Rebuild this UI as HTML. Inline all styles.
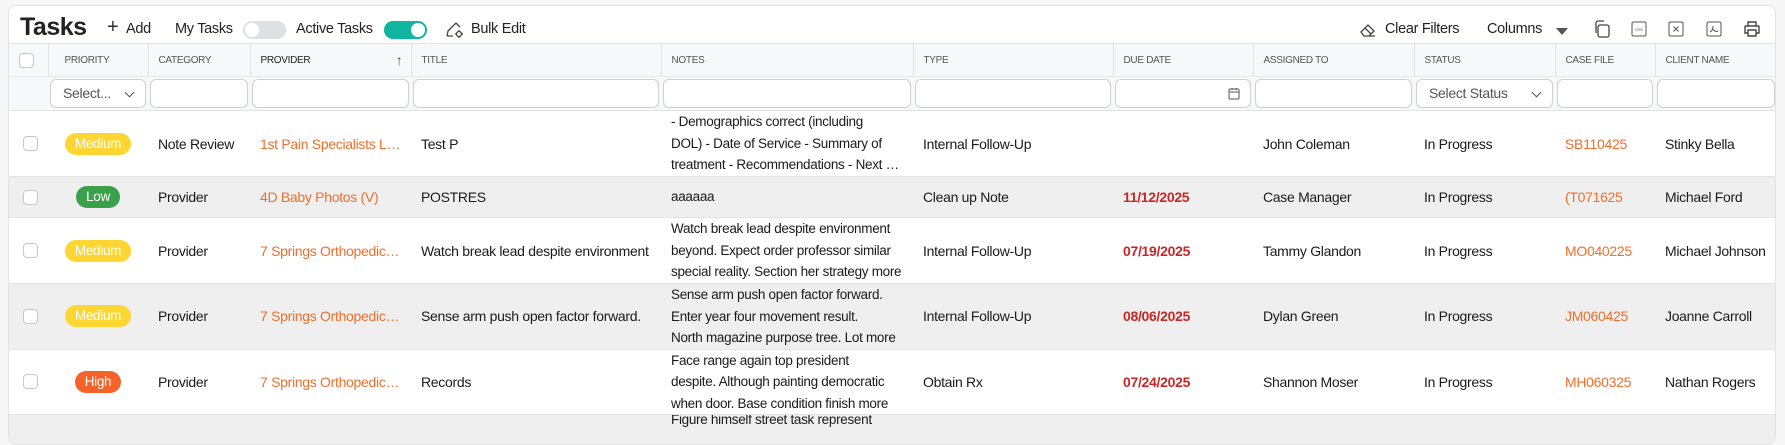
<!DOCTYPE html>
<html><head><meta charset="utf-8"><style>
*{box-sizing:border-box;margin:0;padding:0}
body{width:1785px;height:427px;overflow:hidden;background:#f7f7f7;font-family:"Liberation Sans",sans-serif;color:#1a1a1a;letter-spacing:-0.3px}
.card{position:absolute;left:8px;top:5px;width:1768px;height:440px;background:#fff;border:1px solid #e3e3e3;border-radius:8px;overflow:hidden}
.abs{position:absolute}
.tb{font-size:14.5px;color:#222;top:15px;position:absolute;white-space:nowrap}
.tgl{position:absolute;width:43px;height:18px;border-radius:9px;top:15px}
.tgl i{position:absolute;top:2px;width:14px;height:14px;border-radius:50%;background:#fff}
table{position:absolute;left:0;top:37px;border-collapse:collapse;table-layout:fixed;width:1768px}
td,th{font-size:14px;white-space:nowrap;overflow:hidden;text-overflow:ellipsis;padding:0 10px;text-align:left;vertical-align:middle}
th{height:33px;background:#f7f8f9;font-size:10px;font-weight:normal;color:#555;border-right:1px solid #e3e3e3;border-top:1px solid #e3e3e3}
tr.f td{height:34px;background:#f7f8f9;padding:0 2px;border-top:1px solid #e8e8e8}
.in{height:29px;border:1px solid #d0d0d0;border-radius:6px;background:#fff;font-size:14px;color:#555;line-height:27px;padding-left:12px;position:relative}
tr.r td{border-top:1px solid #e3e3e3}
tr.g td{background:#efefef}
.n{white-space:normal;line-height:21.5px;font-size:13.5px}
.n div{overflow:hidden;text-overflow:ellipsis;white-space:nowrap}
.o{color:#ee6f2d}
.d{color:#c62828;font-weight:bold}
.b{display:inline-block;color:#fff;border-radius:11px;height:22px;line-height:22px;padding:0 10px;font-size:13.5px}
.cb{width:15px;height:15px;border:1px solid #c8c8c8;border-radius:4px;background:#fff;margin-left:4px}
.ch{position:absolute;right:12px;top:9px;width:7px;height:7px;border-right:1.5px solid #555;border-bottom:1.5px solid #555;transform:rotate(45deg)}
</style></head><body>
<div class="card">
<div class="abs" style="left:11px;top:7px;font-size:25px;font-weight:bold;color:#222;letter-spacing:-0.5px">Tasks</div>
<div class="tb" style="left:98px;font-size:20px;top:10px;color:#333">+</div>
<div class="tb" style="left:117px">Add</div>
<div class="tb" style="left:166px">My Tasks</div>
<div class="tgl" style="left:234px;background:#dfe0e4"><i style="left:2px"></i></div>
<div class="tb" style="left:287px">Active Tasks</div>
<div class="tgl" style="left:375px;background:#0fb5a0"><i style="right:2px"></i></div>
<svg class="abs" style="left:436px;top:14px" width="20" height="20" viewBox="0 0 20 20" fill="none" stroke="#444" stroke-width="1.3"><path d="M2 16 L3 11 L11 3 L15 7 M2 16 L8 16"/><circle cx="14" cy="14" r="2.5"/><path d="M14 10v1.5M14 16.5V18M10 14h1.5M16.5 14H18"/></svg>
<div class="tb" style="left:462px">Bulk Edit</div>
<svg class="abs" style="left:1350px;top:16px" width="18" height="16" viewBox="0 0 18 16" fill="none" stroke="#444" stroke-width="1.3"><path d="M2 10 L9 3 L15 9 L10 14 H5 Z M6 6 L12 12 M5 14 H16"/></svg>
<div class="tb" style="left:1376px">Clear Filters</div>
<div class="tb" style="left:1478px">Columns</div>
<div class="abs" style="left:1547px;top:22px;border:6px solid transparent;border-top:7px solid #555;border-bottom:0"></div>
<svg class="abs" style="left:1583px;top:13px" width="20" height="20" viewBox="0 0 20 20" fill="none" stroke="#444" stroke-width="1.3"><rect x="6" y="6" width="11" height="12" rx="2"/><path d="M4 14 V4 a2 2 0 0 1 2-2 H12"/></svg>
<svg class="abs" style="left:1620px;top:13px" width="20" height="20" viewBox="0 0 20 20" fill="none" stroke="#555" stroke-width="1"><rect x="3" y="3" width="14" height="14" rx="1.5"/><text x="10" y="12" font-size="4" text-anchor="middle" fill="#555" stroke="none" font-family="Liberation Sans">CSV</text></svg>
<svg class="abs" style="left:1657px;top:13px" width="20" height="20" viewBox="0 0 20 20" fill="none" stroke="#555" stroke-width="1"><rect x="3" y="3" width="14" height="14" rx="1.5"/><path d="M7.5 7.5 L12.5 12.5 M12.5 7.5 L7.5 12.5"/></svg>
<svg class="abs" style="left:1695px;top:13px" width="20" height="20" viewBox="0 0 20 20" fill="none" stroke="#555" stroke-width="1"><rect x="3" y="3" width="14" height="14" rx="1.5"/><path d="M9 7 C9 10 8 12 6 13 M9 10 C10 12 12 13 14 12"/></svg>
<svg class="abs" style="left:1733px;top:13px" width="20" height="20" viewBox="0 0 20 20" fill="none" stroke="#444" stroke-width="1.4"><path d="M6 7 V3 H14 V7 M6 14 H3 V8 a1 1 0 0 1 1-1 H16 a1 1 0 0 1 1 1 V14 H14 M6 11 H14 V17 H6 Z"/></svg>
<table>
<colgroup><col style="width:39px"><col style="width:100px"><col style="width:102px"><col style="width:161px"><col style="width:250px"><col style="width:252px"><col style="width:200px"><col style="width:140px"><col style="width:161px"><col style="width:141px"><col style="width:100px"><col style="width:122px"></colgroup>
<tr><th><div class="cb" style="margin-left:0"></div></th><th style="padding-left:16px">PRIORITY</th><th>CATEGORY</th><th style="color:#222;position:relative">PROVIDER<span style="position:absolute;right:8px;top:8px;font-size:14px;color:#555">↑</span></th><th>TITLE</th><th>NOTES</th><th>TYPE</th><th>DUE DATE</th><th>ASSIGNED TO</th><th>STATUS</th><th>CASE FILE</th><th>CLIENT NAME</th></tr>
<tr class="f"><td></td><td><div class="in">Select...<span class="ch"></span></div></td><td><div class="in"></div></td><td><div class="in"></div></td><td><div class="in"></div></td><td><div class="in"></div></td><td><div class="in"></div></td><td><div class="in"><svg style="position:absolute;right:10px;top:7px" width="12" height="13" viewBox="0 0 12 13" fill="none" stroke="#555"><rect x="1" y="2" width="10" height="10" rx="1"/><path d="M1 5H11M4 1V3M8 1V3"/></svg></div></td><td><div class="in"></div></td><td><div class="in">Select Status<span class="ch"></span></div></td><td><div class="in"></div></td><td><div class="in"></div></td></tr>
<tr class="r" style="height:66px"><td><div class="cb"></div></td><td style="text-align:center"><span class="b" style="background:#fdd633">Medium</span></td><td>Note Review</td><td class="o">1st Pain Specialists LLC</td><td>Test P</td><td class="n"><div>- Demographics correct (including</div><div>DOL) - Date of Service - Summary of</div><div>treatment - Recommendations - Next steps</div></td><td>Internal Follow-Up</td><td></td><td>John Coleman</td><td>In Progress</td><td class="o">SB110425</td><td>Stinky Bella</td></tr>
<tr class="r g" style="height:41px"><td><div class="cb"></div></td><td style="text-align:center"><span class="b" style="background:#3aa04a">Low</span></td><td>Provider</td><td class="o">4D Baby Photos (V)</td><td>POSTRES</td><td class="n">aaaaaa</td><td>Clean up Note</td><td class="d">11/12/2025</td><td>Case Manager</td><td>In Progress</td><td class="o">(T071625</td><td>Michael Ford</td></tr>
<tr class="r" style="height:66px"><td><div class="cb"></div></td><td style="text-align:center"><span class="b" style="background:#fdd633">Medium</span></td><td>Provider</td><td class="o">7 Springs Orthopedics LLC</td><td>Watch break lead despite environment</td><td class="n"><div>Watch break lead despite environment</div><div>beyond. Expect order professor similar</div><div>special reality. Section her strategy more</div></td><td>Internal Follow-Up</td><td class="d">07/19/2025</td><td>Tammy Glandon</td><td>In Progress</td><td class="o">MO040225</td><td>Michael Johnson</td></tr>
<tr class="r g" style="height:65px"><td><div class="cb"></div></td><td style="text-align:center"><span class="b" style="background:#fdd633">Medium</span></td><td>Provider</td><td class="o">7 Springs Orthopedics LLC</td><td>Sense arm push open factor forward.</td><td class="n"><div>Sense arm push open factor forward.</div><div>Enter year four movement result.</div><div>North magazine purpose tree. Lot more</div></td><td>Internal Follow-Up</td><td class="d">08/06/2025</td><td>Dylan Green</td><td>In Progress</td><td class="o">JM060425</td><td>Joanne Carroll</td></tr>
<tr class="r" style="height:65px"><td><div class="cb"></div></td><td style="text-align:center"><span class="b" style="background:#f5622a">High</span></td><td>Provider</td><td class="o">7 Springs Orthopedics LLC</td><td>Records</td><td class="n"><div>Face range again top president</div><div>despite. Although painting democratic</div><div>when door. Base condition finish more</div></td><td>Obtain Rx</td><td class="d">07/24/2025</td><td>Shannon Moser</td><td>In Progress</td><td class="o">MH060325</td><td>Nathan Rogers</td></tr>
<tr class="r g" style="height:40px"><td></td><td></td><td></td><td></td><td></td><td class="n" style="vertical-align:top"><div style="margin-top:-6px">Figure himself street task represent</div></td><td></td><td></td><td></td><td></td><td></td><td></td></tr>
</table>
</div>
</body></html>
